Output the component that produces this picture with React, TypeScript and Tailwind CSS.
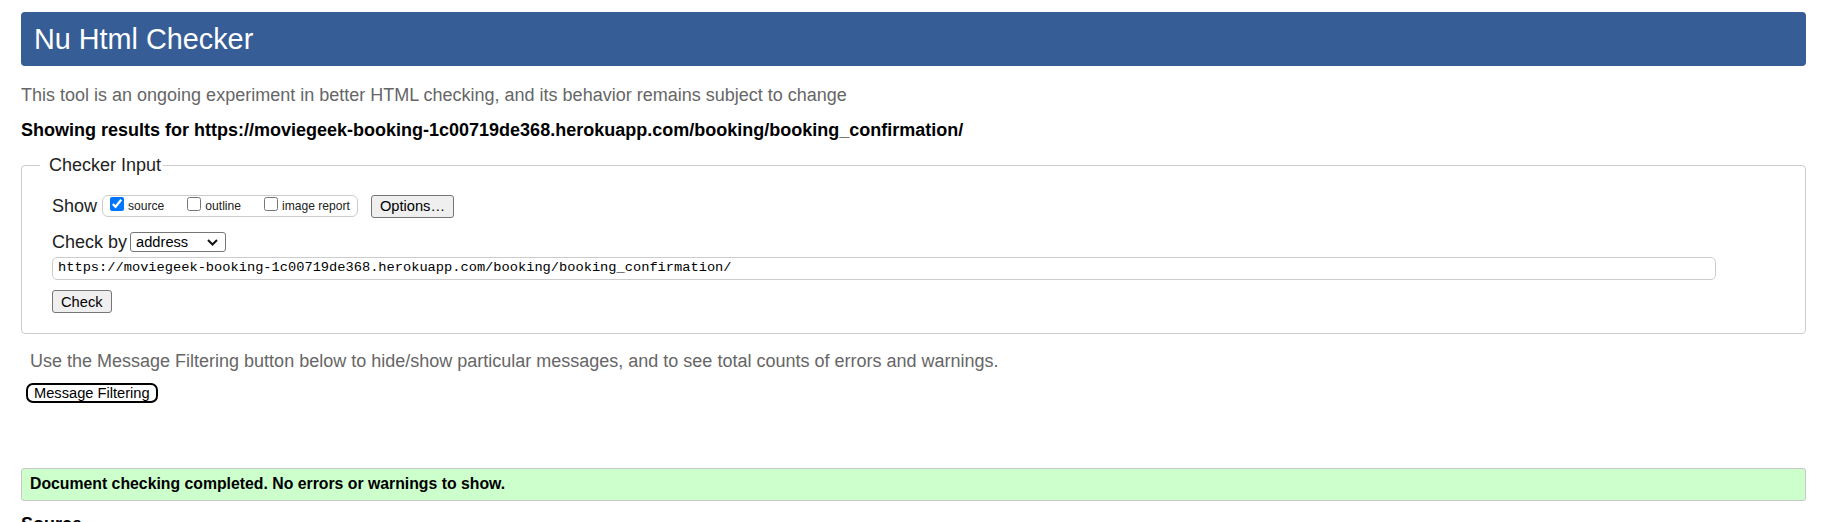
const sans = { fontFamily: '"Liberation Sans", Arial, sans-serif' };

const CheckOption = ({ label, checked }: { label: string; checked?: boolean }) => (
  <label className="flex items-center">
    <input type="checkbox" defaultChecked={checked} className="w-[14px] h-[14px] mb-[5px]" />
    <span className="ml-[4px] text-[12.1px] leading-[14px] text-[#222]">{label}</span>
  </label>
);

const App = () => {
  return (
    <div className="h-[522px] overflow-hidden bg-white pl-[21px] pr-[16px] pt-[12px]" style={sans}>
      <h1 className="h-[54px] rounded-[4px] bg-[#365d95] pl-[13px] text-[28.8px] leading-[54px] text-white">
        Nu Html Checker
      </h1>

      <p className="mt-[18px] text-[18px] leading-[22px] text-[#666]">
        This tool is an ongoing experiment in better HTML checking, and its behavior remains subject to change
      </p>
      <p className="mt-[13px] text-[18px] leading-[22px] font-bold text-black">
        Showing results for https://moviegeek-booking-1c00719de368.herokuapp.com/booking/booking_confirmation/
      </p>

      <fieldset className="mt-[14px] border border-[#cccccc] rounded-[4px] px-[18px] pt-[19px] pb-[19px]">
        <legend className="pl-[9px] pr-[2px] text-[18px] leading-[20px] text-[#222]">Checker Input</legend>
        <div className="pl-[12px]">
          <div className="flex items-center h-[24px]">
            <span className="text-[18px] leading-[22px] text-[#222]">Show</span>
            <div className="ml-[5px] flex items-center gap-[23px] h-[22px] border border-[#cccccc] rounded-[6px] pl-[7px] pr-[7px]">
              <CheckOption label="source" checked />
              <CheckOption label="outline" />
              <CheckOption label="image report" />
            </div>
            <button className="ml-[13px] h-[23px] px-[8px] bg-[#efefef] border border-[#767676] rounded-[3px] text-[14.67px] leading-[20px] text-black">
              Options…
            </button>
          </div>

          <div className="mt-[14px] flex items-center h-[20px]">
            <span className="text-[18px] leading-[22px] text-[#222]">Check by</span>
            <div className="ml-[3px] w-[96px] h-[20px] flex items-center justify-between border border-[#767676] rounded-[3px] pl-[5px] pr-[7px] text-[14.67px] text-black">
              <span>address</span>
              <svg width="11" height="7" viewBox="0 0 11 7" fill="none">
                <path d="M1 1l4.5 4.5L10 1" stroke="#111" strokeWidth="2" />
              </svg>
            </div>
          </div>

          <div className="mt-[5px] w-[1664px] h-[23px] flex items-center border border-[#cccccc] rounded-[5px] pl-[5px] text-[13.7px] text-black" style={{ fontFamily: '"Liberation Mono", monospace' }}>
            https://moviegeek-booking-1c00719de368.herokuapp.com/booking/booking_confirmation/
          </div>

          <button className="mt-[10px] h-[23px] px-[8px] bg-[#efefef] border border-[#767676] rounded-[3px] text-[14.67px] leading-[20px] text-black">
            Check
          </button>
        </div>
      </fieldset>

      <p className="mt-[16px] ml-[9px] text-[18px] leading-[22px] text-[#666]">
        Use the Message Filtering button below to hide/show particular messages, and to see total counts of errors and warnings.
      </p>
      <button className="block mt-[11px] ml-[5px] h-[20px] px-[6px] border-2 border-black rounded-[7px] bg-white text-[14.67px] leading-[16px] text-black">
        Message Filtering
      </button>

      <div className="mt-[65px] h-[33px] flex items-center border border-[#c8c8c8] rounded-[3px] bg-[#ccffcc] pl-[8px] text-[15.8px] font-bold text-black">
        Document checking completed. No errors or warnings to show.
      </div>

      <h2 className="mt-[12px] text-[18px] leading-[22px] font-bold text-black">Source</h2>
    </div>
  );
};

export default App;
